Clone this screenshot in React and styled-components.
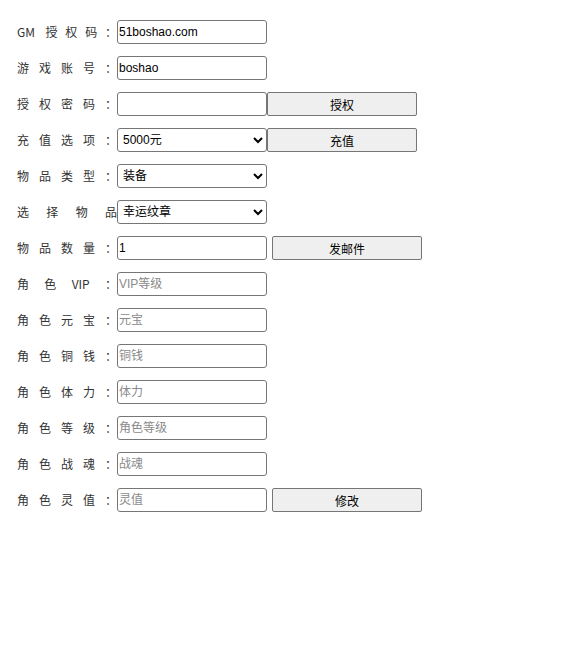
import React from "react";
import styled, { createGlobalStyle } from "styled-components";

const GlobalStyle = createGlobalStyle`
  html, body {
    margin: 0;
    padding: 0;
    background: #fff;
  }
  body {
    font-family: "Liberation Sans", "Noto Sans CJK SC", sans-serif;
  }
`;

const Form = styled.div`
  padding: 20px 0 0 17px;
  display: flex;
  flex-direction: column;
  gap: 12px;
`;

const Row = styled.div`
  display: flex;
  align-items: center;
  height: 24px;
`;

const Label = styled.span`
  display: inline-block;
  width: 100px;
  font-family: "Noto Sans CJK SC", "Liberation Sans", sans-serif;
  font-size: 12px;
  color: #333;
  text-align: justify;
  text-align-last: justify;
  white-space: nowrap;
  line-height: 24px;
`;

const Field = styled.input`
  box-sizing: border-box;
  width: 150px;
  height: 24px;
  margin: 0;
  padding: 1px 1px;
  border: 1px solid #767676;
  border-radius: 3px;
  font-family: "Liberation Sans", "Noto Sans CJK SC", sans-serif;
  font-size: 12px;
  color: #000;
  background: #fff;
  &::placeholder {
    color: #8a8a8a;
  }
`;

const Picker = styled.select`
  box-sizing: border-box;
  width: 150px;
  height: 24px;
  margin: 0;
  padding: 0 1px;
  border: 1px solid #767676;
  border-radius: 3px;
  font-family: "Liberation Sans", "Noto Sans CJK SC", sans-serif;
  font-size: 12px;
  color: #000;
  background: #fff;
`;

const Action = styled.button`
  box-sizing: border-box;
  width: 150px;
  height: 24px;
  margin: 0 0 0 ${(p) => (p.$gap ? 5 : 0)}px;
  padding: 0;
  border: 1px solid #767676;
  border-radius: 2px;
  background: #efefef;
  font-family: "Noto Sans CJK SC", "Liberation Sans", sans-serif;
  font-size: 12px;
  color: #000;
`;

const roleFields = [
  ["角色VIP：", "VIP等级"],
  ["角色元宝：", "元宝"],
  ["角色铜钱：", "铜钱"],
  ["角色体力：", "体力"],
  ["角色等级：", "角色等级"],
  ["角色战魂：", "战魂"],
];

export default function App() {
  return (
    <>
      <GlobalStyle />
      <Form>
        <Row>
          <Label>GM 授权码：</Label>
          <Field defaultValue="51boshao.com" />
        </Row>
        <Row>
          <Label>游戏账号：</Label>
          <Field defaultValue="boshao" />
        </Row>
        <Row>
          <Label>授权密码：</Label>
          <Field type="text" />
          <Action>授权</Action>
        </Row>
        <Row>
          <Label>充值选项：</Label>
          <Picker defaultValue="5000">
            <option value="5000">5000元</option>
          </Picker>
          <Action>充值</Action>
        </Row>
        <Row>
          <Label>物品类型：</Label>
          <Picker>
            <option>装备</option>
          </Picker>
        </Row>
        <Row>
          <Label>选择物品</Label>
          <Picker>
            <option>幸运纹章</option>
          </Picker>
        </Row>
        <Row>
          <Label>物品数量：</Label>
          <Field defaultValue="1" />
          <Action $gap>发邮件</Action>
        </Row>
        {roleFields.map(([label, ph]) => (
          <Row key={label}>
            <Label>{label}</Label>
            <Field placeholder={ph} />
          </Row>
        ))}
        <Row>
          <Label>角色灵值：</Label>
          <Field placeholder="灵值" />
          <Action $gap>修改</Action>
        </Row>
      </Form>
    </>
  );
}
